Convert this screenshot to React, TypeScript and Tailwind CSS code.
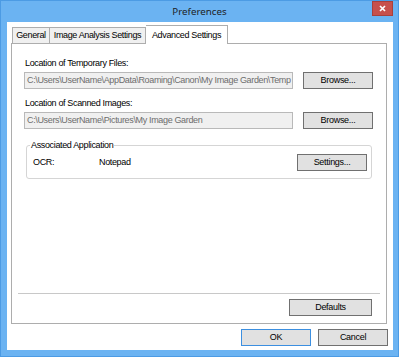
import React from "react";

const font = { fontFamily: '"Liberation Sans", Arial, sans-serif' };

function Btn({ label, w, primary }: { label: string; w: string; primary?: boolean }) {
  return (
    <div
      className={`${w} h-[17px] flex items-center justify-center bg-[#e1e1e1] border text-[9px] tracking-[-0.3px] text-black leading-none ${
        primary ? "border-[#3c8fe0]" : "border-[#707070]"
      }`}
    >
      {label}
    </div>
  );
}

function Field({ value }: { value: string }) {
  return (
    <div className="w-[269px] h-[17px] border border-[#b9b9b9] bg-[#f0f0f0] flex items-center pl-[2px] text-[9px] tracking-[-0.35px] text-[#6d6d6d] leading-none overflow-hidden whitespace-nowrap">
      {value}
    </div>
  );
}

const txt = "text-[9px] tracking-[-0.35px] text-black";

export default function App() {
  return (
    <div
      className="w-[399px] h-[357px] bg-[#6bb3f2] border border-[#4c9be4] flex flex-col"
      style={font}
    >
      {/* Title bar */}
      <div className="relative h-[21px] flex items-center justify-center">
        <span className="text-[9.8px] text-[#1e1e1e] leading-none mt-[1px]" style={{ fontFamily: '"Noto Sans", "Liberation Sans", sans-serif' }}>
          Preferences
        </span>
        <div className="absolute right-[5px] top-[0px] w-[21px] h-[15px] bg-[#c7504c] border border-[#a9403c] flex items-center justify-center">
          <svg width="7" height="7" viewBox="0 0 7 7">
            <path d="M1 1 L6 6 M6 1 L1 6" stroke="#ffffff" strokeWidth="1.7" />
          </svg>
        </div>
      </div>

      {/* Client */}
      <div className="ml-[6px] mr-[5px] h-[328px] bg-white flex flex-col">
        {/* Tabs */}
        <div className="flex items-end h-[21px] pl-[5px]">
          <div className={`w-[38px] h-[16px] bg-[#f0f0f0] border border-b-0 border-[#adadad] flex items-center justify-center leading-none ${txt}`}>
            General
          </div>
          <div className={`w-[96px] h-[16px] bg-[#f0f0f0] border border-l-0 border-b-0 border-[#adadad] flex items-center justify-center leading-none ${txt}`}>
            Image Analysis Settings
          </div>
          <div className={`relative w-[82px] h-[19px] bg-white border border-l-0 border-b-0 border-[#adadad] flex items-center justify-center leading-none -mb-px z-10 ${txt}`}>
            Advanced Settings
          </div>
        </div>

        {/* Panel */}
        <div className="ml-[4px] w-[376px] h-[281px] border border-[#adadad] bg-white flex flex-col px-[12px]">
          <div className={`mt-[13px] h-[13px] leading-[13px] pl-[1px] ${txt}`}>
            Location of Temporary Files:
          </div>
          <div className="mt-[2px] flex items-center gap-[10px]">
            <Field value="C:\Users\UserName\AppData\Roaming\Canon\My Image Garden\Temp" />
            <Btn label="Browse..." w="w-[70px]" />
          </div>
          <div className={`mt-[8px] h-[13px] leading-[13px] pl-[1px] ${txt}`}>
            Location of Scanned Images:
          </div>
          <div className="mt-[2px] flex items-center gap-[10px]">
            <Field value="C:\Users\UserName\Pictures\My Image Garden" />
            <Btn label="Browse..." w="w-[70px]" />
          </div>

          {/* Group box */}
          <div className="relative mt-[16px] mx-[2px] h-[34px] border border-[#d5d5d5] rounded-[3px] flex items-center pl-[6px] pr-[4px]">
            <div className={`absolute left-[3px] -top-[7px] bg-white px-[1px] leading-[13px] ${txt}`}>
              Associated Application
            </div>
            <div className={`w-[66px] leading-none mt-[1px] ${txt}`}>OCR:</div>
            <div className={`flex-1 leading-none mt-[1px] ${txt}`}>Notepad</div>
            <Btn label="Settings..." w="w-[70px]" />
          </div>

          <div className="flex-1" />
          <div className="-mx-[6px] h-px bg-[#c8c8c8]" />
          <div className="mt-[5px] mb-[7px] flex justify-end pr-[2px]">
            <Btn label="Defaults" w="w-[83px]" />
          </div>
        </div>

        {/* Bottom buttons */}
        <div className="mt-[5px] flex justify-end gap-[7px] pr-[5px]">
          <Btn label="OK" w="w-[70px]" primary />
          <Btn label="Cancel" w="w-[70px]" />
        </div>
      </div>
    </div>
  );
}
